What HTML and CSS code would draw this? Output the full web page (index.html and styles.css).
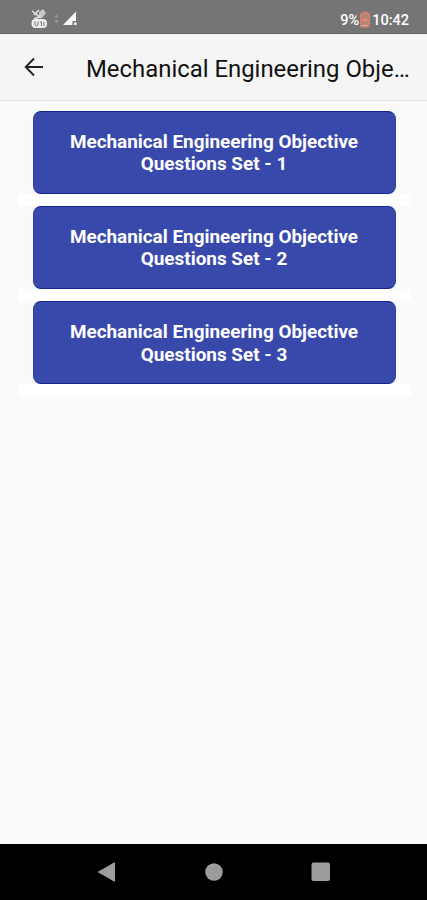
FILE: index.html
```html
<!DOCTYPE html>
<html lang="en">
<head>
    <meta charset="UTF-8">
    <meta name="viewport" content="width=device-width, initial-scale=1.0">
    <title>Mechanical Engineering Objective Questions</title>
    <link rel="stylesheet" href="styles.css">
</head>
<body>
    <div class="screen">
        <div class="status-bar">
            <svg class="status-icons" width="48" height="22" viewBox="0 0 48 22">
                <g fill="none" stroke="#e8e8e8" stroke-width="1.5">
                    <path d="M2 3l9 7M4 7l5-5M8 9l4-5" />
                    <path d="M4 11l8-3" />
                </g>
                <path d="M9 4l4-3 3 4-4 5-3-2z" fill="#c8c8c8" />
                <rect x="1.500" y="11" width="15.500" height="9" rx="4" fill="#eee" />
                <path d="M5 13.500v2.500q0 2 1.500 2T8 16v-2.500M10 14h1.500v4M14 14v4" fill="none" stroke="#747474" />
                <path d="M26.500 6l2.500 4h-5zM26.500 16l2.500-4h-5z" fill="#929292" />
                <path d="M46 3.500V13h-3.500v4H33z" fill="#f7f7f7" />
                <rect x="44" y="14.500" width="2.500" height="2.500" fill="#f7f7f7" />
            </svg>
            <div class="status-info">
                <span>9%</span>
                <svg class="battery" width="10" height="17" viewBox="0 0 10 17">
                    <path d="M3 1h4v1.500h1.500q1 0 1 1V15q0 1-1 1h-7q-1 0-1-1V3.500q0-1 1-1H3z" fill="#b88475" stroke="#df8068" />
                    <path d="M2.500 9h5" stroke="#ee8e77" stroke-width="1.500" />
                    <path d="M2 14.500h6" stroke="#c9b5ad" />
                </svg>
                <span>10:42</span>
            </div>
        </div>

        <div class="header">
            <svg class="back" width="20" height="20" viewBox="0 0 20 20">
                <path d="M19 10H2M10 1.500L1.700 10l8.300 8.500" fill="none" stroke="#222" stroke-width="1.900" />
            </svg>
            <h1>Mechanical Engineering Obje…</h1>
        </div>

        <div class="list">
            <div class="list-item">
                <button class="set-btn">Mechanical Engineering Objective Questions Set - 1</button>
            </div>
            <div class="list-item">
                <button class="set-btn">Mechanical Engineering Objective Questions Set - 2</button>
            </div>
            <div class="list-item">
                <button class="set-btn">Mechanical Engineering Objective Questions Set - 3</button>
            </div>
        </div>

        <div class="nav-bar">
            <svg width="20" height="20" viewBox="0 0 20 20"><path d="M0.500 10L18 0v20z" fill="#9c9c9c" /></svg>
            <svg width="20" height="20" viewBox="0 0 20 20"><circle cx="10" cy="10" r="8.800" fill="#9c9c9c" /></svg>
            <svg width="20" height="20" viewBox="0 0 20 20"><rect x="0.500" y="0.500" width="18.500" height="18.500" rx="2" fill="#9c9c9c" /></svg>
        </div>
    </div>
</body>
</html>
```

FILE: styles.css
```css
* {
    margin: 0;
    padding: 0;
    box-sizing: border-box;
}

body {
    font-family: Roboto, sans-serif;
    background-color: #fafafa;
    color: #111;
}

.screen {
    display: flex;
    flex-direction: column;
    height: 100vh;
    overflow: hidden;
}

.status-bar {
    display: flex;
    justify-content: space-between;
    height: 34px;
    padding: 8px 18px 0 30px;
    background-color: #757575;
    border-bottom: 1px solid #666;
}

.status-info {
    display: flex;
    height: 25px;
    align-items: center;
    color: #fff;
    font-size: 14.5px;
    font-weight: 500;
}

.battery {
    margin: 0 2px 2px 1px;
}

.header {
    display: flex;
    align-items: center;
    height: 67px;
    padding: 0 14px 0 24px;
    background-color: #f5f5f5;
    border-bottom: 1px solid #e4e4e4;
}

.back {
    flex-shrink: 0;
}

.header h1 {
    margin-left: 42px;
    padding-top: 3px;
    font-size: 23.9px;
    font-weight: 400;
    white-space: nowrap;
}

.list {
    flex: 1;
    padding: 9.5px 16px 0 18px;
}

.list-item {
    height: 95.3px;
    padding: 0 15.5px 0 14.5px;
    background: linear-gradient(#fafafa 83px, #fff 83px);
}

.set-btn {
    display: block;
    width: 100%;
    height: 83px;
    padding: 2px 30px 0;
    background-color: #3949ab;
    color: #fff;
    border: 1px solid #3040a2;
    border-top-color: #14258f;
    border-bottom-color: #14258f;
    border-radius: 8px;
    font-family: inherit;
    font-size: 18.9px;
    font-weight: 700;
    line-height: 22.5px;
    cursor: pointer;
}

.nav-bar {
    display: flex;
    justify-content: center;
    align-items: center;
    gap: 87px;
    height: 56px;
    background-color: #000;
}
```
